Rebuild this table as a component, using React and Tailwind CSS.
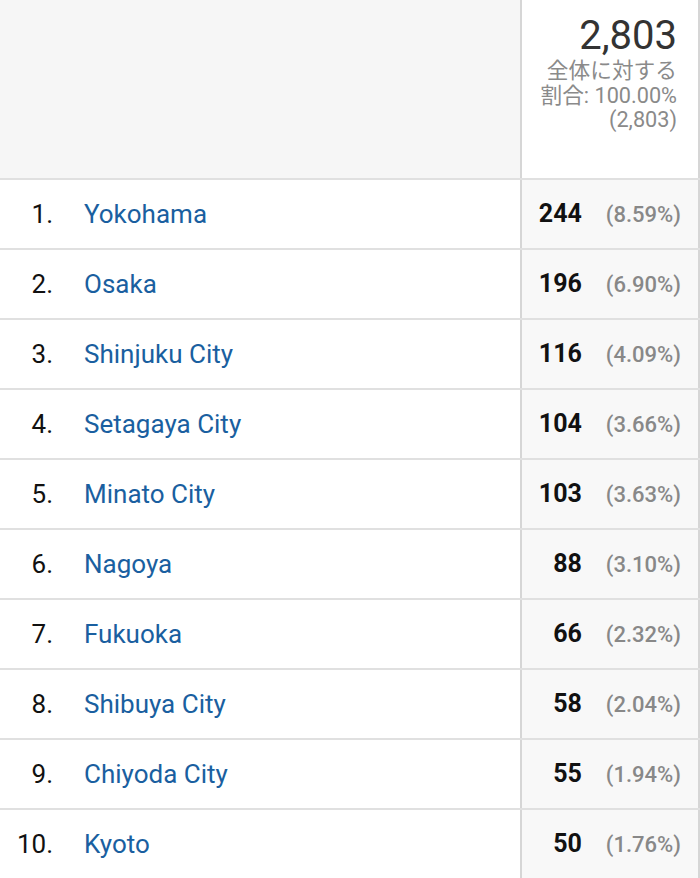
const rows = [
  { rank: 1, city: 'Yokohama', value: 244, pct: '8.59%' },
  { rank: 2, city: 'Osaka', value: 196, pct: '6.90%' },
  { rank: 3, city: 'Shinjuku City', value: 116, pct: '4.09%' },
  { rank: 4, city: 'Setagaya City', value: 104, pct: '3.66%' },
  { rank: 5, city: 'Minato City', value: 103, pct: '3.63%' },
  { rank: 6, city: 'Nagoya', value: 88, pct: '3.10%' },
  { rank: 7, city: 'Fukuoka', value: 66, pct: '2.32%' },
  { rank: 8, city: 'Shibuya City', value: 58, pct: '2.04%' },
  { rank: 9, city: 'Chiyoda City', value: 55, pct: '1.94%' },
  { rank: 10, city: 'Kyoto', value: 50, pct: '1.76%' },
];

export default function App() {
  return (
    <div className="w-[700px] h-[878px] overflow-hidden bg-white font-['Roboto','Noto_Sans_CJK_JP',sans-serif]">
      {/* header */}
      <div className="flex h-[180px] border-b-2 border-[#e0e0e0]">
        <div className="flex-1 bg-[#f6f6f6]" />
        <div className="w-[180px] border-x-2 border-[#d6d6d6] bg-white pr-[21px] pt-[13px] text-right">
          <div className="text-[40px] leading-[46px] text-[#333]">2,803</div>
          <div className="text-[21.7px] leading-[24.5px] text-[#8a8a8a]">
            全体に対する
            <br />
            割合: 100.00%
            <br />
            (2,803)
          </div>
        </div>
      </div>

      {/* rows */}
      {rows.map((r) => (
        <div key={r.rank} className="flex h-[70px] border-b-2 border-[#e0e0e0]">
          <div className="flex flex-1 items-center">
            <span className="w-[53px] text-right text-[26px] text-[#111]">{r.rank}.</span>
            <span className="ml-[31px] text-[26px] text-[#1a5fa0]">{r.city}</span>
          </div>
          <div className="flex w-[180px] items-center justify-end border-x-2 border-[#d6d6d6] bg-[#f8f8f8] pr-[17px]">
            <span className="text-[25px] font-bold text-[#111]">{r.value}</span>
            <span className="ml-[24px] text-[22px] font-medium text-[#888]">({r.pct})</span>
          </div>
        </div>
      ))}
    </div>
  );
}
